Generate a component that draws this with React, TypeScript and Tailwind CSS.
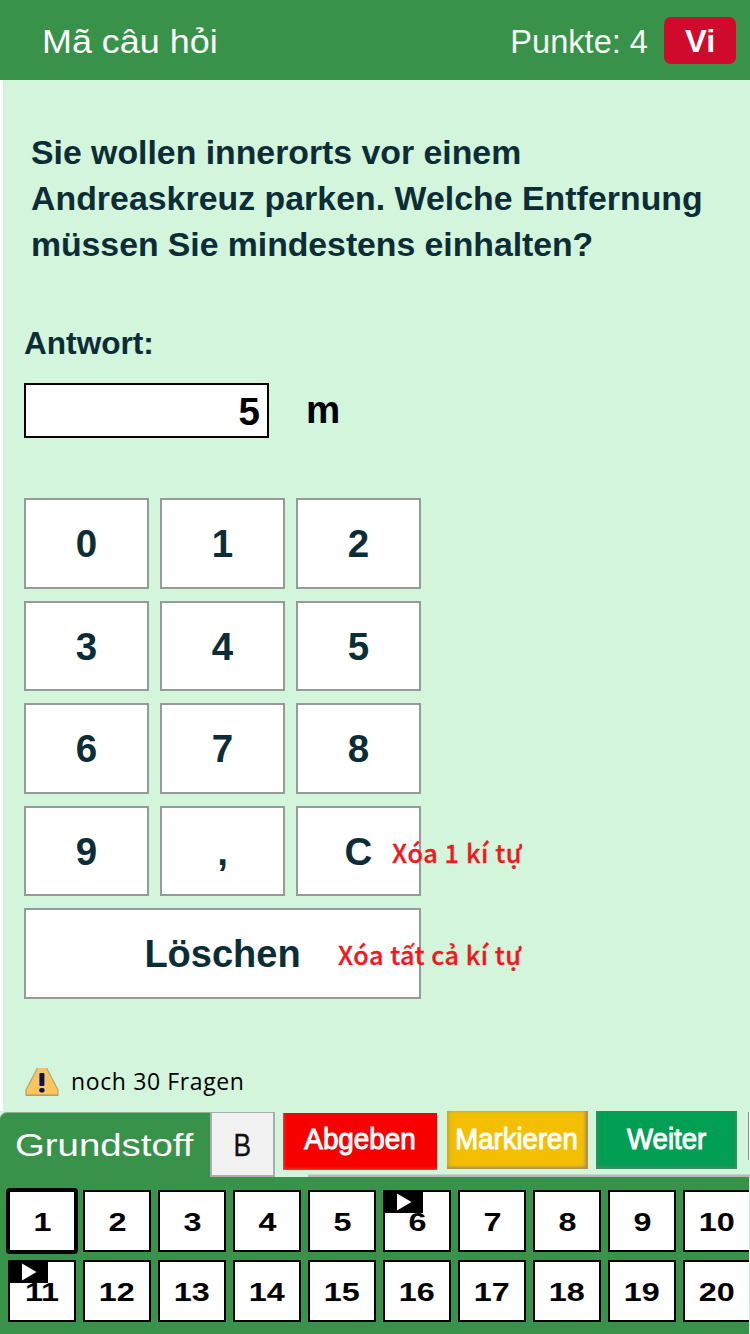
const KEYS = ['0', '1', '2', '3', '4', '5', '6', '7', '8', '9', ',', 'C'];
const QUESTIONS = Array.from({ length: 20 }, (_, i) => i + 1);
const MARKED = [6, 11];

const keyClass =
  'relative flex items-center justify-center border-2 border-[#979b98] bg-white pt-[2px] font-bold leading-none text-[#0c2d36]';

const noteClass =
  "absolute top-[28px] font-medium leading-[32px] whitespace-nowrap text-[#f0181e] [-webkit-text-stroke:0.3px_#f0181e] [font-family:'Noto_Sans_CJK_SC','Noto_Sans',sans-serif]";

function Header() {
  return (
    <header className="flex h-20 items-center bg-[#389249] pl-[42px] pr-[14px] text-white">
      <h1 className="origin-left scale-x-[1.095] pt-[5px] text-[32.8px] leading-none whitespace-nowrap">Mã câu hỏi</h1>
      <span className="ml-auto mr-[16px] origin-right pt-[5px] text-[32.6px] leading-none whitespace-nowrap text-[#f4faf5]">
        Punkte: 4
      </span>
      <button className="flex h-[47px] w-[72px] items-center justify-center rounded-[7px] bg-[#cf0a2c] pt-[2px] text-[30.5px] font-bold leading-none">
        <span className="scale-x-[1.07]">Vi</span>
      </button>
    </header>
  );
}

function Keypad() {
  return (
    <div className="mt-[60px] grid w-[397px] grid-cols-[125px_125px_125px] auto-rows-[90.5px] gap-x-[11px] gap-y-[12px]">
      {KEYS.map((k) => (
        <button key={k} className={keyClass + ' text-[38.5px]'}>
          {k}
          {k === 'C' && <span className={noteClass + ' left-[94px] text-[25.3px] tracking-[0.6px]'}>Xóa 1 kí tự</span>}
        </button>
      ))}
      <button className={keyClass + ' col-span-3 text-[38px]'}>
        Löschen
        <span className={noteClass + ' left-[312px] text-[25.3px] tracking-[0.48px]'}>Xóa tất cả kí tự</span>
      </button>
    </div>
  );
}

function WarningIcon() {
  return (
    <svg width="34" height="28" viewBox="0 0 34 28" className="mt-px shrink-0">
      <path d="M12.5 0H21.5L33 22V27.5H1V22Z" fill="#fbc45c" />
      <path d="M12.5 0L1 22V27.5M21.5 0L33 22V27.5" fill="none" stroke="#b9a878" strokeWidth="1.3" />
      <path d="M1 27.2H33" stroke="#a8996f" strokeWidth="1.4" />
      <rect x="14.4" y="5" width="5" height="13" rx="1" fill="#0b1354" />
      <rect x="14.2" y="20" width="5.4" height="4.4" rx="2" fill="#0b1354" />
    </svg>
  );
}

function Toolbar() {
  return (
    <div className="flex h-[66px] items-start bg-[#d3f5dc]">
      <div className="mt-px flex h-[65px] w-[210px] items-center rounded-tl-[7px] border-t border-[#8fb096] bg-[#389249] pt-[2px] pl-[15px] text-[31.2px] leading-none text-white">
        <span className="origin-left scale-x-[1.23]">Grundstoff</span>
      </div>
      <div className="mt-px flex h-[65px] w-[65px] items-center justify-center border-t border-r-2 border-b-2 border-l-2 border-[#a9adaf] bg-[#f2f2f3] pt-[2px] text-[31px] leading-none text-[#111] [-webkit-text-stroke:0.3px_#111]">
        <span className="scale-x-[0.85]">B</span>
      </div>
      <div className="flex h-[66px] flex-1 flex-col">
        <div className="flex h-[63px] items-start pl-[8px]">
          <button className="mt-[2px] flex h-[57px] w-[154px] items-center justify-center bg-[#f80000] pb-[4px] text-[29px] leading-none text-white shadow-[inset_2px_-2px_3px_-1px_#c95b50] [-webkit-text-stroke:1px_white]">
            <span className="scale-x-[0.96]">Abgeben</span>
          </button>
          <button className="ml-[10px] flex h-[58px] w-[141px] items-center justify-center bg-[#f4bf00] pb-[1px] pr-[3px] text-[29px] leading-none whitespace-nowrap text-white shadow-[inset_-3px_-2px_3px_#a8905a,inset_2px_0_4px_#c9a52c] [-webkit-text-stroke:1px_white]">
            <span className="scale-x-[0.95]">Markieren</span>
          </button>
          <button className="ml-[8px] flex h-[58px] w-[141px] items-center justify-center bg-[#009f54] pb-[1px] text-[29px] leading-none text-white shadow-[inset_0_-3px_3px_-1px_#4b8a66,inset_-2px_0_3px_-1px_#4b8a66,inset_2px_0_3px_-1px_#4b8a66] [-webkit-text-stroke:1px_white]">
            <span className="scale-x-[0.95]">Weiter</span>
          </button>
          <div className="mt-[1px] ml-auto h-[48px] w-[2px] border-l border-[#8b9590] bg-[#eef1ef]" />
        </div>
        <div className="ml-[33px] h-[3px] border-t border-[#c6d6ce] bg-[#b4b9bb]" />
      </div>
    </div>
  );
}

function Flag() {
  return (
    <span className="absolute -top-[2px] -left-[2px] flex h-[23px] w-[40px] items-center justify-center bg-black pl-[2px]">
      <svg width="16" height="18" viewBox="0 0 16 18">
        <path d="M1 0.5L15.5 9L1 17.5Z" fill="#fff" />
      </svg>
    </span>
  );
}

function QuestionGrid() {
  return (
    <nav className="h-[157px] overflow-hidden border-r border-[#d3f5dc] bg-[#389249] pt-[13px] pl-[8px]">
      <div className="grid w-[743px] grid-cols-[repeat(10,68px)] grid-rows-[62px_62px] gap-x-[7px] gap-y-[8px]">
        {QUESTIONS.map((n) => (
          <button
            key={n}
            className={
              'relative flex items-center justify-center border-2 border-black bg-white pt-[2px] text-[26.5px] font-bold leading-none text-black ' +
              (n === 1 ? 'rounded-[2px] outline-2 outline-black' : '')
            }
          >
            <span className="scale-x-[1.22]">{n}</span>
            {MARKED.includes(n) && <Flag />}
          </button>
        ))}
      </div>
    </nav>
  );
}

export default function App() {
  return (
    <div className="h-[1334px] w-[750px] overflow-hidden bg-white [font-family:'Liberation_Sans',Arial,sans-serif]">
      <Header />
      <main className="ml-[3px] h-[1031px] bg-[#d3f5dc] pt-[49px] pl-[21px] text-[#0c2d36]">
        <div className="ml-[7px] text-[33.8px] font-bold leading-[46px] whitespace-nowrap">
          <p>Sie wollen innerorts vor einem</p>
          <p className="tracking-[0.05px]">Andreaskreuz parken. Welche Entfernung</p>
          <p className="tracking-[-0.04px]">müssen Sie mindestens einhalten?</p>
        </div>
        <div className="mt-[58px] text-[31.6px] font-bold leading-[36px]">Antwort:</div>
        <div className="mt-[22px] flex h-[55px] items-center text-[38.5px] font-bold leading-none text-black">
          <div className="flex h-full w-[245px] items-center justify-end border-2 border-black bg-white pt-[3px] pr-[7px]">5</div>
          <span className="ml-[37px] pb-[1px]">m</span>
        </div>
        <Keypad />
        <div className="mt-[68px] flex items-start gap-[12px] pl-[1px]">
          <WarningIcon />
          <span className="text-[23px] leading-[28px] tracking-[0.62px] whitespace-nowrap text-black [font-family:'Open_Sans',sans-serif]">
            noch 30 Fragen
          </span>
        </div>
      </main>
      <Toolbar />
      <QuestionGrid />
    </div>
  );
}
